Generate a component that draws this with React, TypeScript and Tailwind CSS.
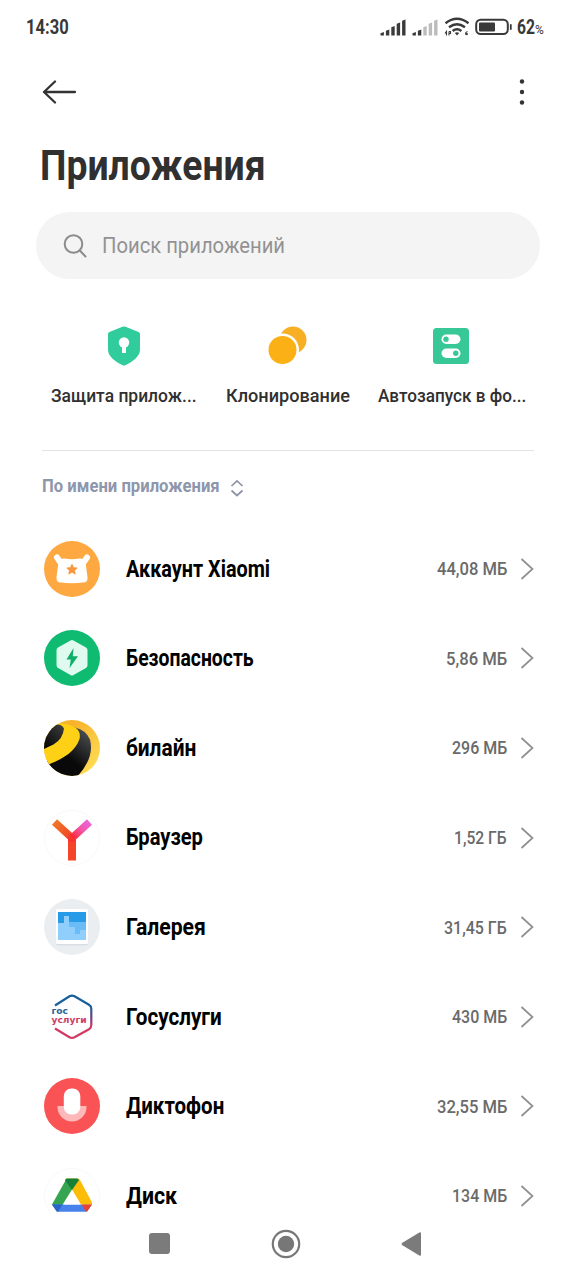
import React, { useLayoutEffect, useRef, useState } from 'react'
import { clsx } from 'clsx'

interface FitTextProps {
  text: string
  width: number
  className?: string
}

// Condenses or stretches one line of text to a fixed width
const FitText: React.FC<FitTextProps> = ({ text, width, className }) => {
  const ref = useRef<HTMLSpanElement>(null)
  const [scale, setScale] = useState(1)

  useLayoutEffect(() => {
    if (ref.current) {
      setScale(width / ref.current.offsetWidth)
    }
  }, [text, width])

  return (
    <span className={clsx('block shrink-0 whitespace-nowrap', className)} style={{ width }}>
      <span ref={ref} className="inline-block origin-left" style={{ transform: `scaleX(${scale})` }}>
        {text}
      </span>
    </span>
  )
}

const SignalIcon = ({ active }: { active: number }) => (
  <svg className="mr-[6px] h-[17px] w-[26px]" viewBox="0 0 26 17">
    {[3.5, 6, 9.5, 13, 16].map((h, i) => (
      <path
        key={h}
        d={`M${0.5 + i * 5.4} ${16.5 - h + 1.2}l3.4 -1.2V16.5h-3.400z`}
        fill={i < active ? '#3a3a3a' : '#bcbcbc'}
      />
    ))}
  </svg>
)

const StatusBar = () => (
  <header className="flex h-[54px] items-center pr-[32px] pl-[26px] text-[#383838]">
    <FitText text="14:30" width={43} className="text-[20px] font-bold" />
    <div className="ml-auto flex items-center">
      <SignalIcon active={5} />
      <SignalIcon active={2} />
      <svg className="h-[20px] w-[26px]" viewBox="0 0 26 20" fill="none" stroke="#3a3a3a">
        <path d="M1.500 6.200Q13 -2.800 24.500 6.200M5 10.300Q13 4 21 10.300M8.600 14Q13 10.600 17.400 14" strokeWidth="2.400" />
        <path d="M10.800 16Q13 14.400 15.200 16L13 18.500z" fill="#3a3a3a" stroke="none" />
        <path d="M2.500 18.500v-4l-1.500 2M5 14.500v4M5 14.500h1.500v2H5M23.500 14.500q-2 .5 -2 2.500q1.300 1.500 2 0q-.5 -1 -1.500 0" strokeWidth="1.100" />
      </svg>
      <svg className="ml-[5px] h-[18px] w-[38px]" viewBox="0 0 38 18">
        <rect x="1.200" y="1.700" width="31.600" height="14.300" rx="4.500" fill="none" stroke="#3a3a3a" strokeWidth="2" />
        <rect x="4" y="4.500" width="16" height="9" rx="1" fill="#3a3a3a" />
        <path d="M35.800 7v4" stroke="#3a3a3a" strokeWidth="1.800" strokeLinecap="round" />
      </svg>
      <FitText text="62" width={18} className="ml-[4px] text-[20px] font-bold" />
      <FitText text="%" width={9} className="mt-[5px] text-[12px]" />
    </div>
  </header>
)

const ShieldIcon = () => (
  <svg className="h-[40px] w-[34px]" viewBox="0 0 34 40">
    <path d="M15.500.8Q17 0 18.500.8L31.600 6Q33 6.600 33 8.200V23.500C33 31 25 35.800 18.200 39.300Q17 40 15.800 39.300C9 35.800 1 31 1 23.500V8.200Q1 6.600 2.400 6z" fill="#31cc9c" />
    <circle cx="17" cy="16.500" r="5.200" fill="#fff" />
    <path d="M15 19h4v8h-4z" fill="#fff" />
  </svg>
)

const CloneIcon = () => (
  <svg className="mr-[2px] h-[40px] w-[40px]" viewBox="0 0 40 40">
    <circle cx="26" cy="14" r="13.500" fill="#f7b026" />
    <circle cx="15.500" cy="24" r="16.500" fill="#fff" />
    <circle cx="15.500" cy="24" r="14" fill="#fbb115" />
  </svg>
)

const AutostartIcon = () => (
  <svg className="mr-[2px] h-[36px] w-[36px]" viewBox="0 0 36 36">
    <rect width="36" height="36" rx="3.500" fill="#38c898" />
    <rect x="8.500" y="6.500" width="19" height="9.500" rx="4.750" fill="#fff" />
    <circle cx="13" cy="11.200" r="2.700" fill="#38c898" />
    <rect x="8.500" y="20.500" width="19" height="9.500" rx="4.750" fill="#fff" />
    <circle cx="22.800" cy="25.200" r="2.700" fill="#38c898" />
  </svg>
)

const AccountIcon = () => (
  <svg viewBox="0 0 56 56">
    <circle cx="28" cy="28" r="28" fill="#fda841" />
    <path d="M16.500 21.500L13 16.500M39.500 21.500L43 16.500" stroke="#fff" strokeWidth="6" strokeLinecap="round" />
    <path d="M14.500 21Q17 17 20.500 17.500Q28 19 35.500 17.500Q39 17 41.500 21Q42.500 29 43.500 36Q44.200 41.500 39 41.500Q28 42.800 17 41.500Q11.800 41.500 12.500 36Q13.500 29 14.500 21z" fill="#fff" />
    <path d="M28 23l1.600 3.500 3.800.4-2.800 2.600.8 3.700-3.400-1.900-3.400 1.900.8-3.700-2.800-2.600 3.800-.4z" fill="#f7973c" stroke="#f7973c" strokeWidth=".6" />
  </svg>
)

const SecurityIcon = () => (
  <svg viewBox="0 0 56 56">
    <circle cx="28" cy="28" r="28" fill="#0fbb70" />
    <path d="M26.500 10.500Q28 9.700 29.500 10.500L42 17.500Q43.500 18.500 43.500 20V35Q43.500 37 42 38L29.500 45Q28 46 26.500 45L14 38Q12.500 37 12.500 35V20Q12.500 18.500 14 17.500z" fill="#dffbf0" />
    <path d="M29.500 18L22.500 29.500h4.300L25.500 38L34 26.300h-5.200z" fill="#0fae69" />
  </svg>
)

const BeelineIcon = () => (
  <svg viewBox="0 0 56 56">
    <defs>
      <clipPath id="beeClip"><circle cx="28" cy="28" r="28" /></clipPath>
      <linearGradient id="beeBack" x1="0" y1="0" x2="1" y2="1">
        <stop offset="0.300" stopColor="#f7b32b" />
        <stop offset="1" stopColor="#ffe45c" />
      </linearGradient>
      <linearGradient id="beeBand" gradientUnits="userSpaceOnUse" x1="44" y1="14" x2="20" y2="44">
        <stop stopColor="#484b4e" />
        <stop offset="0.800" stopColor="#090909" />
      </linearGradient>
      <linearGradient id="beeHead" gradientUnits="userSpaceOnUse" x1="20" y1="8" x2="0" y2="28">
        <stop stopColor="#3a3a3a" />
        <stop offset="0.900" stopColor="#090909" />
      </linearGradient>
    </defs>
    <g clipPath="url(#beeClip)">
      <path d="M0 0h56v56H0z" fill="url(#beeBack)" />
      <path d="M31 7.500Q42 10 46 19.500Q51 38 32 58L0 58V44L24 20z" fill="url(#beeBand)" />
      <path d="M0 27L10 4.500Q22 2 32 8Q37 12 35.500 19C31 32 18 40 0 46z" fill="#ffd116" />
      <path d="M-1 29.500V10L8 5.500Q17 2.500 20 8.500Q19 19 9.500 24.500Q4 27 -1 29.500z" fill="url(#beeHead)" />
    </g>
  </svg>
)

const BrowserIcon = () => (
  <svg viewBox="0 0 56 56">
    <defs>
      <linearGradient id="ybLeft" gradientUnits="userSpaceOnUse" x1="10" y1="12" x2="28" y2="30">
        <stop stopColor="#f07828" />
        <stop offset="1" stopColor="#f23d28" />
      </linearGradient>
      <linearGradient id="ybRight" gradientUnits="userSpaceOnUse" x1="46" y1="12" x2="28" y2="30">
        <stop stopColor="#e967dc" />
        <stop offset="0.450" stopColor="#f355aa" />
        <stop offset="0.900" stopColor="#fa2935" />
      </linearGradient>
    </defs>
    <circle cx="28" cy="28" r="27.500" fill="#fff" stroke="#f8f8f8" />
    <path d="M24 27h8v23.500h-8z" fill="#f54528" />
    <path d="M10.500 12L28 28" stroke="url(#ybLeft)" strokeWidth="7.500" />
    <path d="M45.500 12L28 28" stroke="url(#ybRight)" strokeWidth="7.500" />
    <path d="M24 26l4 3.500 4-3.500v6h-8z" fill="#f93430" />
  </svg>
)

const GalleryIcon = () => (
  <svg viewBox="0 0 56 56">
    <circle cx="28" cy="28" r="28" fill="#ebeef1" />
    <rect x="12" y="11" width="32" height="35.500" rx="1.500" fill="#d9dfe5" />
    <rect x="12" y="10" width="32" height="35" rx="1.500" fill="#fff" />
    <path d="M14 13h28v28H14z" fill="#90cffb" />
    <path d="M14 13h28v10h-11v5h-6V17h-5v7h-6z" fill="#279ae8" />
    <path d="M31 23h11v8h-6v4h-5v-7h-6v-5z" fill="#69bcf5" />
  </svg>
)

const GosuslugiIcon = () => (
  <svg viewBox="0 0 56 56">
    <defs>
      <linearGradient id="gosLine" x1="0" y1="0" x2="0" y2="1">
        <stop offset="0.250" stopColor="#17609c" />
        <stop offset="0.550" stopColor="#744379" />
        <stop offset="0.750" stopColor="#d23862" />
      </linearGradient>
    </defs>
    <path d="M11 16.500L25.500 7.300Q28 5.800 30.500 7.300L45 15.800Q47.300 17.200 47.300 20V36Q47.300 38.800 45 40.200L30.500 48.200Q28 49.500 25.500 48.200L11 39.500" fill="none" stroke="url(#gosLine)" strokeWidth="2.200" />
    <text x="7.500" y="25.300" textLength="16.500" lengthAdjust="spacingAndGlyphs" fill="#246497" className="font-['DejaVu_Sans',sans-serif] text-[9px] font-bold">гос</text>
    <text x="7.500" y="34" textLength="35" lengthAdjust="spacingAndGlyphs" fill="#cc3c65" className="font-['DejaVu_Sans',sans-serif] text-[9px] font-bold">услуги</text>
  </svg>
)

const RecorderIcon = () => (
  <svg viewBox="0 0 56 56">
    <circle cx="28" cy="28" r="28" fill="#fa5355" />
    <path d="M13.500 28h29v1a14.500 14.500 0 0 1-29 0z" fill="#fdb9b9" />
    <rect x="19.800" y="10.500" width="16.500" height="26" rx="7.500" fill="#fff" />
  </svg>
)

const DriveIcon = () => (
  <svg viewBox="0 0 56 56">
    <circle cx="28" cy="28" r="27.500" fill="#fff" stroke="#f8f8f8" />
    <path d="M22 11.500h12l-6 10L14 44 8 36.500z" fill="#35a551" />
    <path d="M8 36.500h40L43.500 43Q43 43.700 42 43.700H14Q13 43.700 12.500 43z" fill="#4781ec" />
    <path d="M22 10.500h12Q35 10.500 36 12L48 34.500V36.500H37L28 21.500z" fill="#fcbd06" />
    <path d="M37.500 36.500H48L43.500 43Q42.500 44 41.500 43z" fill="#e94235" />
    <path d="M8 36.500h10.500L14 43.500Q12.500 44 12 42.500z" fill="#2865cb" />
    <path d="M21 12Q21.500 10.500 23 10.500h10Q34.500 10.500 35 12L28 22z" fill="#178038" />
    <path d="M28 23L36 36.500H20z" fill="#fff" />
  </svg>
)

const quickActions = [
  { label: 'Защита прилож...', width: 146, icon: ShieldIcon },
  { label: 'Клонирование', width: 124, icon: CloneIcon },
  { label: 'Автозапуск в фо...', width: 148, icon: AutostartIcon },
]

const apps = [
  { name: 'Аккаунт Xiaomi', width: 144, size: '44,08 МБ', sizeWidth: 70, icon: AccountIcon },
  { name: 'Безопасность', width: 128, size: '5,86 МБ', sizeWidth: 61, icon: SecurityIcon },
  { name: 'билайн', width: 70, size: '296 МБ', sizeWidth: 55, icon: BeelineIcon },
  { name: 'Браузер', width: 77, size: '1,52 ГБ', sizeWidth: 53, icon: BrowserIcon },
  { name: 'Галерея', width: 80, size: '31,45 ГБ', sizeWidth: 63, icon: GalleryIcon },
  { name: 'Госуслуги', width: 96, size: '430 МБ', sizeWidth: 55, icon: GosuslugiIcon },
  { name: 'Диктофон', width: 98, size: '32,55 МБ', sizeWidth: 70, icon: RecorderIcon },
  { name: 'Диск', width: 51, size: '134 МБ', sizeWidth: 55, icon: DriveIcon },
]

export default function App() {
  return (
    <div className="flex h-[1280px] w-[576px] flex-col overflow-hidden bg-white font-[Roboto,'Noto_Sans',sans-serif]">
      <StatusBar />

      {/* Toolbar */}
      <div className="flex h-[75px] shrink-0 items-center justify-between pr-[50px] pl-[42px]">
        <svg className="h-[24px] w-[35px]" viewBox="0 0 35 24" fill="none" stroke="#333" strokeWidth="2.300" strokeLinecap="round" strokeLinejoin="round">
          <path d="M33 12H2M13 1.500L2 12L13 22.500" />
        </svg>
        <svg className="h-[28px] w-[8px]" viewBox="0 0 8 28" fill="#333">
          <circle cx="4" cy="3.500" r="2.200" />
          <circle cx="4" cy="14" r="2.200" />
          <circle cx="4" cy="24.500" r="2.200" />
        </svg>
      </div>

      <h1 className="flex h-[83px] shrink-0 items-center pb-[10px] pl-[40px] leading-none text-[#303030]">
        <FitText text="Приложения" width={226} className="text-[42px] font-bold" />
      </h1>

      {/* Search */}
      <div className="mx-[36px] flex h-[67px] shrink-0 items-center rounded-full bg-[#f4f4f4] pl-[27px] text-[#929292]">
        <svg className="h-[24px] w-[24px]" viewBox="0 0 24 24" fill="none" stroke="#8b8b8b" strokeWidth="2" strokeLinecap="round">
          <circle cx="10.500" cy="10" r="8.800" />
          <path d="M16.800 16.500L22.500 22.500" />
        </svg>
        <FitText text="Поиск приложений" width={183} className="ml-[15px] text-[22px]" />
      </div>

      {/* Quick actions */}
      <div className="mx-[42px] flex h-[172px] shrink-0 border-b border-[#e2e2e2] pt-[47px]">
        {quickActions.map(({ label, width, icon: Icon }) => (
          <div key={label} className="flex w-[164px] shrink-0 flex-col items-center">
            <div className="flex h-[40px] items-center">
              <Icon />
            </div>
            <FitText text={label} width={width} className="mt-[17px] text-[19px] leading-[26px] font-medium text-[#303030]" />
          </div>
        ))}
      </div>

      {/* Sort order */}
      <div className="flex h-[73px] shrink-0 items-center pl-[42px] text-[#8e96ac]">
        <FitText text="По имени приложения" width={178} className="pb-[2px] text-[19px] font-bold" />
        <svg className="ml-[10px] h-[18px] w-[14px]" viewBox="0 0 14 18" fill="none" stroke="#8d93a4" strokeWidth="1.700">
          <path d="M1.500 7L7 1.800L12.500 7M1.500 11.500L7 16.500L12.500 11.500" />
        </svg>
      </div>

      {/* Application list */}
      <ul className="min-h-0 flex-1 overflow-hidden">
        {apps.map(({ name, width, size, sizeWidth, icon: Icon }) => (
          <li key={name} className="flex h-[89.600px] items-center pr-[42px] pl-[44px]">
            <div className="h-[56px] w-[56px] shrink-0">
              <Icon />
            </div>
            <FitText text={name} width={width} className="ml-[26px] pt-[2px] text-[23px] font-bold text-black" />
            <div className="ml-auto flex items-center">
              <FitText text={size} width={sizeWidth} className="text-[18px] font-medium text-[#6a6a6a]" />
              <svg className="ml-[13px] h-[22px] w-[14px]" viewBox="0 0 14 22" fill="none" stroke="#8f8f8f" strokeWidth="1.700">
                <path d="M1.500 1L12.500 11L1.500 21" />
              </svg>
            </div>
          </li>
        ))}
      </ul>

      {/* Navigation bar */}
      <nav className="flex h-[66px] shrink-0 items-center bg-white pb-[7px] pl-[149px]">
        <div className="h-[21px] w-[21px] rounded-[3px] bg-[#7b7b7b]" />
        <svg className="ml-[101px] h-[30px] w-[30px]" viewBox="0 0 30 30">
          <circle cx="15" cy="15" r="13.200" fill="none" stroke="#777" strokeWidth="2.200" />
          <circle cx="15" cy="15" r="8.200" fill="#777" />
        </svg>
        <svg className="ml-[100px] h-[26px] w-[20px]" viewBox="0 0 20 26">
          <path d="M20 2.500Q20 .5 18.300 1.500L1 12Q0 13 1 14L18.300 24.500Q20 25.500 20 23.500z" fill="#7b7b7b" />
        </svg>
      </nav>
    </div>
  )
}
